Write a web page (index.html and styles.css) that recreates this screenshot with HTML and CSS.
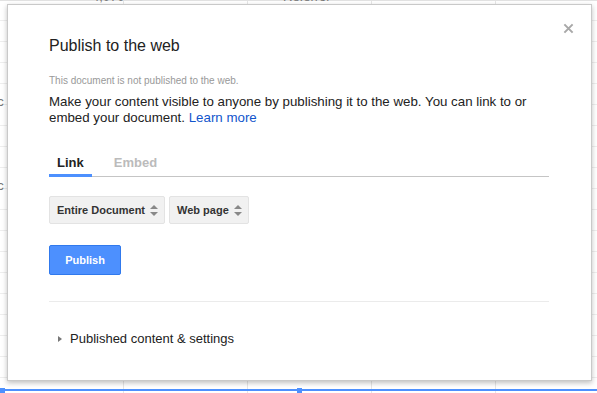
FILE: index.html
```html
<!DOCTYPE html>
<html lang="en">
<head>
  <meta charset="UTF-8" />
  <title>Publish to the web</title>
  <link rel="stylesheet" href="styles.css">
</head>
<body>
  <div class="sheet">
    <span class="cell c1">4,070</span>
    <span class="cell c2">Re.error</span>
    <span class="cell c3">rc</span>
    <span class="cell c4">rc</span>
    <div class="selection"></div>
  </div>

  <div class="dialog">
    <button class="close" aria-label="Close">
      <svg viewBox="0 0 12 12" width="11" height="11"><path d="M1.5 1.5l9 9M10.5 1.5l-9 9" stroke="#a8a8a8" stroke-width="2.2"/></svg>
    </button>
    <h2 class="title">Publish to the web</h2>
    <p class="status">This document is not published to the web.</p>
    <p class="intro">Make your content visible to anyone by publishing it to the web. You can link to or embed your document. <a href="#">Learn more</a></p>

    <div class="tabs">
      <span class="tab active">Link</span>
      <span class="tab">Embed</span>
    </div>

    <div class="options">
      <div class="select">Entire Document <span class="arrows"></span></div>
      <div class="select">Web page <span class="arrows"></span></div>
    </div>

    <button class="publish">Publish</button>

    <div class="settings">
      <span class="caret"></span>
      Published content &amp; settings
    </div>
  </div>
</body>
</html>
```

FILE: styles.css
```css
body {
  margin: 0;
  width: 597px;
  height: 393px;
  overflow: hidden;
  font-family: "Liberation Sans", Arial, sans-serif;
  background: #fff;
  position: relative;
}
/* Spreadsheet behind the dialog */
.sheet {
  position: absolute;
  inset: 0;
  background:
    linear-gradient(#e2e2e2, #e2e2e2) 0 0 / 100% 1px no-repeat,
    repeating-linear-gradient(90deg, transparent 0 123px, #e6e6e6 123px 124px),
    repeating-linear-gradient(180deg, transparent 0 20px, #eeeeee 20px 21px);
}
.cell { position: absolute; font-size: 13px; color: #777; }
.c1 { left: 92px; top: -11px; }
.c2 { left: 283px; top: -11px; }
.c3 { left: -7px; top: 94px; }
.c4 { left: -7px; top: 178px; }
.selection {
  position: absolute;
  left: 0; top: 389px;
  width: 600px; height: 1px;
  border-top: 2px solid #4d90fe;
}
.selection:before, .selection:after {
  content: '';
  position: absolute;
  top: -3px;
  width: 5px; height: 5px;
  background: #4d90fe;
}
.selection:before { left: 0; }
.selection:after { left: 297px; }

/* Dialog */
.dialog {
  position: absolute;
  left: 7px;
  top: 4px;
  width: 500px;
  height: 346px;
  padding: 29px 42px 0 41px;
  background: #fff;
  border: 1px solid #c9c9c9;
  box-shadow: 0 2px 5px rgba(0,0,0,.25);
}
.close {
  position: absolute;
  right: 17px;
  top: 17px;
  border: none;
  background: none;
  padding: 0;
  cursor: pointer;
}
.title {
  margin: 0;
  font-size: 16px;
  font-weight: normal;
  line-height: 24px;
  color: #222;
}
.status {
  margin: 16px 0 0;
  font-size: 10px;
  line-height: 14px;
  color: #999;
}
.intro {
  max-width: 485px;
  margin: 6px 0 0;
  font-size: 13.3px;
  line-height: 16px;
  color: #222;
}
.intro a { color: #15c; text-decoration: none; }
.tabs {
  display: flex;
  gap: 14px;
  margin-top: 21px;
  border-bottom: 1px solid #c5c5c5;
}
.tab {
  padding: 8px 8px 3px;
  font-size: 13px;
  font-weight: bold;
  line-height: 16px;
  color: #bbb;
  border-bottom: 3px solid transparent;
  margin-bottom: -1px;
}
.tab.active { color: #222; border-color: #4d90fe; }
.options {
  display: flex;
  gap: 4px;
  margin-top: 19px;
}
.select {
  display: flex;
  align-items: center;
  gap: 5px;
  height: 26px;
  padding: 0 6px 0 7px;
  background: #f1f1f1;
  border: 1px solid #e3e3e3;
  border-radius: 2px;
  font-size: 11px;
  font-weight: bold;
  color: #333;
}
.arrows {
  position: relative;
  width: 8px;
  height: 11px;
}
.arrows:before, .arrows:after {
  content: '';
  position: absolute;
  left: 0;
  border-left: 4px solid transparent;
  border-right: 4px solid transparent;
}
.arrows:before { top: 0; border-bottom: 4px solid #888; }
.arrows:after { bottom: 0; border-top: 4px solid #888; }
.publish {
  display: block;
  margin-top: 21px;
  width: 72px;
  height: 30px;
  background: #4d90fe;
  border: 1px solid #3079ed;
  border-radius: 2px;
  color: #fff;
  font-family: inherit;
  font-size: 11px;
  font-weight: bold;
}
.settings {
  display: flex;
  align-items: center;
  gap: 8px;
  margin-top: 26px;
  border-top: 1px solid #ebebeb;
  padding: 29px 0 0 9px;
  font-size: 13px;
  line-height: 16px;
  color: #222;
}
.caret {
  width: 0; height: 0;
  border-top: 3px solid transparent;
  border-bottom: 3px solid transparent;
  border-left: 4px solid #777;
}
```
